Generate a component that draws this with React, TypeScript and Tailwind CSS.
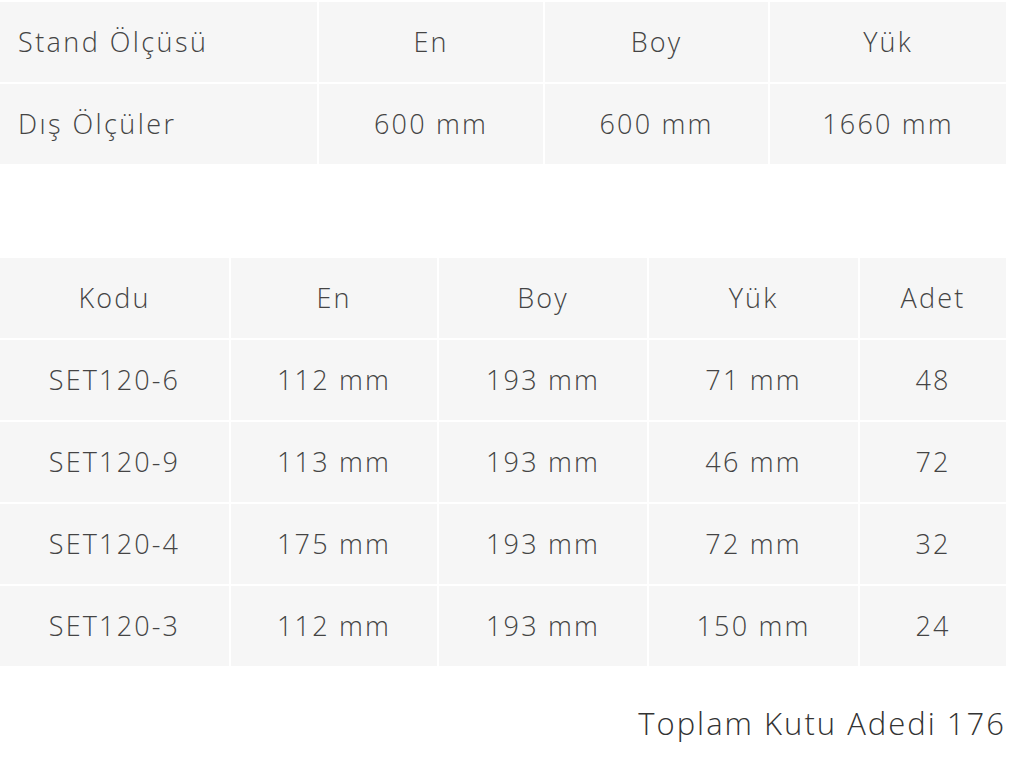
import React from "react";

const stand = {
  head: ["Stand Ölçüsü", "En", "Boy", "Yük"],
  row: ["Dış Ölçüler", "600 mm", "600 mm", "1660 mm"],
};

const boxes = [
  ["SET120-6", "112 mm", "193 mm", "71 mm", "48"],
  ["SET120-9", "113 mm", "193 mm", "46 mm", "72"],
  ["SET120-4", "175 mm", "193 mm", "72 mm", "32"],
  ["SET120-3", "112 mm", "193 mm", "150 mm", "24"],
];

const cell =
  "bg-[#f6f6f6] h-[80px] flex items-center justify-center text-[27px] font-light text-[#444444] tracking-[0.08em]";

export default function App() {
  return (
    <div
      className="w-[1024px] h-[761px] bg-white overflow-hidden"
      style={{ fontFamily: '"Open Sans", "Liberation Sans", sans-serif' }}
    >
      <div className="w-[1006px] pt-[2px]">
        <div className="grid grid-cols-[317px_224px_223px_236px] gap-[2px]">
          {[stand.head, stand.row].map((r, i) =>
            r.map((c, j) => (
              <div
                key={i + "-" + j}
                className={
                  j === 0
                    ? "bg-[#f6f6f6] h-[80px] flex items-center pl-[18px] text-[27px] font-light text-[#444444] tracking-[0.09em]"
                    : cell
                }
              >
                {c}
              </div>
            ))
          )}
        </div>

        <div className="mt-[94px] grid grid-cols-[229px_206px_208px_209px_146px] gap-[2px]">
          {["Kodu", "En", "Boy", "Yük", "Adet"].map((h) => (
            <div key={h} className={cell}>
              {h}
            </div>
          ))}
          {boxes.map((r, i) =>
            r.map((c, j) => (
              <div key={i + "-" + j} className={cell}>
                {c}
              </div>
            ))
          )}
        </div>

        <div className="mt-[34px] text-right text-[31px] font-light text-[#333333] tracking-[0.065em]">
          Toplam Kutu Adedi 176
        </div>
      </div>
    </div>
  );
}
